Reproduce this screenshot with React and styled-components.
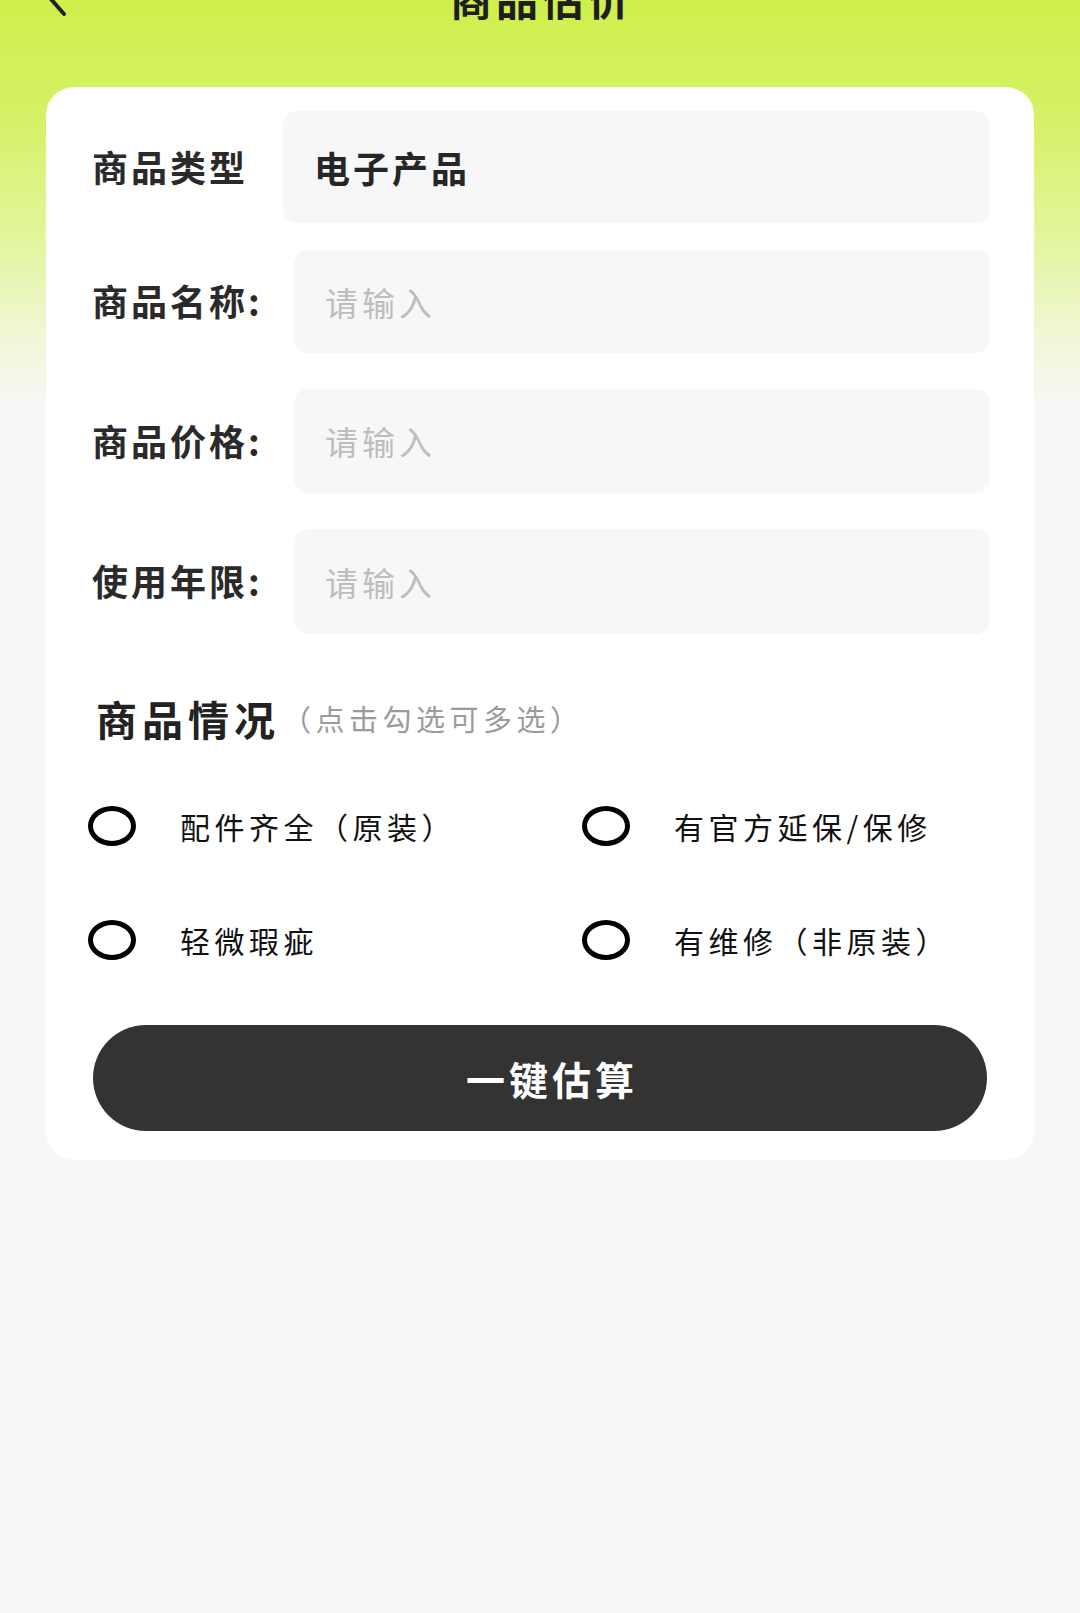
import React, { useState } from "react";
import styled, { createGlobalStyle } from "styled-components";

const Global = createGlobalStyle`
  html, body { margin: 0; padding: 0; }
  body {
    background: #f7f7f7;
    font-family: "Noto Sans CJK SC", "Noto Sans", sans-serif;
  }
  * { box-sizing: border-box; }
`;

const Page = styled.div`
  width: 1080px;
  min-height: 1613px;
  overflow: hidden;
  background: linear-gradient(
    180deg,
    #cfef4c 0px,
    #d5f164 110px,
    #e3f59d 240px,
    #f0f7d8 340px,
    #f7f7f7 410px,
    #f7f7f7 100%
  );
`;

const Header = styled.header`
  display: grid;
  grid-template-columns: 1fr auto 1fr;
  align-items: center;
  height: 60px;
  margin-top: -32px;
  padding: 0 46px;
`;

const Back = styled.div`
  display: flex;
  align-items: center;
  color: #222;
`;

const Title = styled.h1`
  margin: 0;
  padding-left: 4px;
  font-size: 42px;
  font-weight: 700;
  letter-spacing: 4px;
  color: #1e1e1e;
  line-height: 60px;
`;

const Card = styled.section`
  margin: 59px 46px 0;
  background: #fff;
  border-radius: 28px;
  padding: 24px 44px 29px 46px;
  display: flex;
  flex-direction: column;
`;

const FieldRow = styled.div`
  display: grid;
  grid-template-columns: ${(p) => p.$labelWidth}px 1fr;
  align-items: center;
  margin-top: ${(p) => p.$gap}px;
`;

const Label = styled.span`
  font-size: 36px;
  font-weight: 700;
  letter-spacing: 3px;
  color: #2a2a2a;
  white-space: nowrap;
  margin-top: -3px;
`;

const InputBox = styled.div`
  height: ${(p) => p.$h}px;
  background: #f7f7f7;
  border-radius: 14px;
  display: flex;
  align-items: center;
  padding-left: ${(p) => p.$pad}px;
  font-size: ${(p) => (p.$placeholder ? 33 : 36)}px;
  font-weight: ${(p) => (p.$placeholder ? 400 : 700)};
  letter-spacing: ${(p) => (p.$placeholder ? 4 : 3)}px;
  color: ${(p) => (p.$placeholder ? "#bdbdbd" : "#262626")};
`;

const SectionTitle = styled.div`
  display: flex;
  align-items: center;
  height: 50px;
  margin-top: 59px;
  padding-left: 4px;
`;

const SectionMain = styled.span`
  font-size: 41px;
  font-weight: 700;
  letter-spacing: 5px;
  color: #222;
`;

const SectionHint = styled.span`
  margin-left: 2px;
  font-size: 29px;
  letter-spacing: 4.5px;
  color: #9b9b9b;
`;

const Options = styled.div`
  display: grid;
  grid-template-columns: 494px 1fr;
  grid-auto-rows: 80px;
  row-gap: 34px;
  margin-top: 43px;
  margin-left: -4px;
`;

const Option = styled.label`
  display: flex;
  align-items: center;
  cursor: pointer;
`;

const Circle = styled.span`
  width: 48px;
  height: 40px;
  border-radius: 50%;
  border: 5px solid #000;
  background: ${(p) => (p.$on ? "#000" : "#fff")};
  flex: none;
`;

const OptionText = styled.span`
  margin-left: 44px;
  font-size: 30px;
  letter-spacing: 4.5px;
  color: #111;
  white-space: nowrap;
`;

const Button = styled.button`
  margin-top: 45px;
  height: 106px;
  width: 894px;
  margin-left: 1px;
  padding: 0 0 0 24px;
  border: none;
  border-radius: 53px;
  background: #333333;
  color: #fff;
  font-family: inherit;
  font-size: 39px;
  font-weight: 700;
  letter-spacing: 4px;
  cursor: pointer;
`;

const options = [
  "配件齐全（原装）",
  "有官方延保/保修",
  "轻微瑕疵",
  "有维修（非原装）",
];

export default function App() {
  const [sel, setSel] = useState({});
  return (
    <Page>
      <Global />
      <Header>
        <Back>
          <svg width="22" height="40" viewBox="0 0 22 40" fill="none">
            <path d="M18 4 L4 20 L18 36" stroke="#222" strokeWidth="4" strokeLinecap="round" strokeLinejoin="round" />
          </svg>
        </Back>
        <Title>商品估价</Title>
        <span />
      </Header>
      <Card>
        <FieldRow $labelWidth={191} $gap={0}>
          <Label>商品类型</Label>
          <InputBox $h={112} $pad={31}>电子产品</InputBox>
        </FieldRow>
        <FieldRow $labelWidth={202} $gap={27}>
          <Label>商品名称:</Label>
          <InputBox $h={103} $pad={31} $placeholder>请输入</InputBox>
        </FieldRow>
        <FieldRow $labelWidth={202} $gap={36}>
          <Label>商品价格:</Label>
          <InputBox $h={104} $pad={31} $placeholder>请输入</InputBox>
        </FieldRow>
        <FieldRow $labelWidth={202} $gap={36}>
          <Label>使用年限:</Label>
          <InputBox $h={105} $pad={31} $placeholder>请输入</InputBox>
        </FieldRow>
        <SectionTitle>
          <SectionMain>商品情况</SectionMain>
          <SectionHint>（点击勾选可多选）</SectionHint>
        </SectionTitle>
        <Options>
          {options.map((o) => (
            <Option key={o} onClick={() => setSel((s) => ({ ...s, [o]: !s[o] }))}>
              <Circle $on={!!sel[o]} />
              <OptionText>{o}</OptionText>
            </Option>
          ))}
        </Options>
        <Button>一键估算</Button>
      </Card>
    </Page>
  );
}
